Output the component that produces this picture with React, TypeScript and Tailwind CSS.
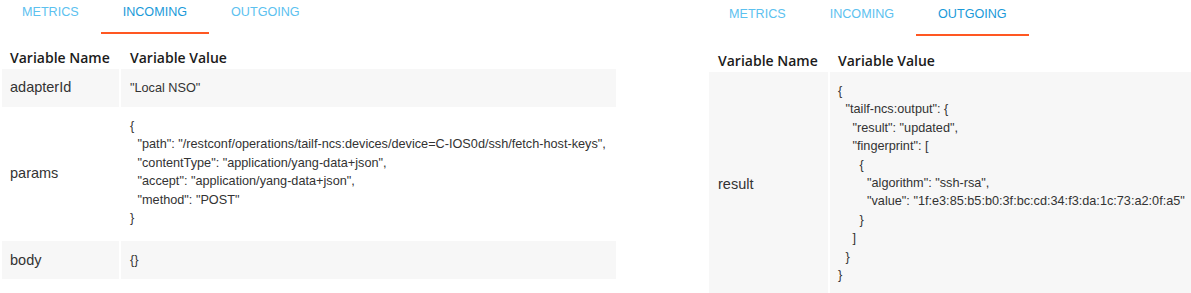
import React from 'react';

type Line = { indent: number; text: string };

const INDENT: Record<number, string> = {
    0: 'pl-0',
    1: 'pl-[7.5px]',
    2: 'pl-[14.5px]',
    3: 'pl-[21.5px]',
    4: 'pl-[29px]',
};

const paramsLines: Line[] = [
    { indent: 0, text: '{' },
    { indent: 1, text: '"path": "/restconf/operations/tailf-ncs:devices/device=C-IOS0d/ssh/fetch-host-keys",' },
    { indent: 1, text: '"contentType": "application/yang-data+json",' },
    { indent: 1, text: '"accept": "application/yang-data+json",' },
    { indent: 1, text: '"method": "POST"' },
    { indent: 0, text: '}' },
];

const resultLines: Line[] = [
    { indent: 0, text: '{' },
    { indent: 1, text: '"tailf-ncs:output": {' },
    { indent: 2, text: '"result": "updated",' },
    { indent: 2, text: '"fingerprint": [' },
    { indent: 3, text: '{' },
    { indent: 4, text: '"algorithm": "ssh-rsa",' },
    { indent: 4, text: '"value": "1f:e3:85:b5:b0:3f:bc:cd:34:f3:da:1c:73:a2:0f:a5"' },
    { indent: 3, text: '}' },
    { indent: 2, text: ']' },
    { indent: 1, text: '}' },
    { indent: 0, text: '}' },
];

const TABS = ['METRICS', 'INCOMING', 'OUTGOING'];

const Tabs: React.FC<{ active: string }> = ({ active }) => (
    <div className="flex [font-family:'Liberation_Sans',Arial,sans-serif]">
        {TABS.map((t) => (
            <div
                key={t}
                className={`px-[22px] pt-[4px] pb-[11px] text-[12.6px] leading-[17px] border-b-2 ${
                    t === active ? 'text-[#1a9ad9] border-[#ff5722]' : 'text-[#5cc1ef] border-transparent'
                }`}
            >
                {t}
            </div>
        ))}
    </div>
);

const Code: React.FC<{ lines: Line[] }> = ({ lines }) => (
    <div className="whitespace-pre leading-[18.4px]">
        {lines.map((l, i) => (
            <div key={i} className={INDENT[l.indent]}>{l.text}</div>
        ))}
    </div>
);

type Row = { name: string; value: React.ReactNode; shaded: boolean; block?: boolean };

const Table: React.FC<{ rows: Row[]; nameWidth: string; namePad: string; valuePad: string }> = ({ rows, nameWidth, namePad, valuePad }) => (
    <div className="flex flex-col">
        <div className="flex h-[35px] items-end gap-[2px] pl-[2px] [font-family:'Open_Sans',sans-serif] font-semibold text-[14px] leading-[20px] text-[#1b1b1b]">
            <div className={`${nameWidth} ${namePad} pb-[1px]`}>Variable Name</div>
            <div className={`flex-1 ${valuePad} pb-[1px]`}>Variable Value</div>
        </div>
        {rows.map((r) => (
            <div key={r.name} className="flex gap-[2px] pl-[2px]">
                <div className={`${nameWidth} ${namePad} flex items-center text-[14.5px] text-[#333] [font-family:'Liberation_Sans',Arial,sans-serif] ${r.shaded ? 'bg-[#f7f7f7]' : 'bg-white'}`}>
                    {r.name}
                </div>
                <div className={`flex-1 ${valuePad} ${r.block ? 'pt-[10px] pb-[14px]' : 'py-[10px] leading-[18px]'} text-[12.7px] text-[#333] [font-family:'Liberation_Sans',Arial,sans-serif] ${r.shaded ? 'bg-[#f7f7f7]' : 'bg-white'}`}>
                    {r.value}
                </div>
            </div>
        ))}
    </div>
);

export default function App() {
    return (
        <div className="w-[1191px] h-[293px] overflow-hidden bg-white flex">
            <div className="w-[616px] shrink-0">
                <Tabs active="INCOMING" />
                <Table
                    nameWidth="w-[117px]"
                    namePad="pl-[8px]"
                    valuePad="pl-[9px]"
                    rows={[
                        { name: 'adapterId', value: '"Local NSO"', shaded: true },
                        { name: 'params', value: <Code lines={paramsLines} />, shaded: false, block: true },
                        { name: 'body', value: '{}', shaded: true },
                    ]}
                />
            </div>
            <div className="ml-[91px] flex-1 mt-[2px]">
                <Tabs active="OUTGOING" />
                <div className="h-[1px]" />
                <Table
                    nameWidth="w-[119px]"
                    namePad="pl-[9px]"
                    valuePad="pl-[8px]"
                    rows={[
                        { name: 'result', value: <Code lines={resultLines} />, shaded: true, block: true },
                    ]}
                />
            </div>
        </div>
    );
}
